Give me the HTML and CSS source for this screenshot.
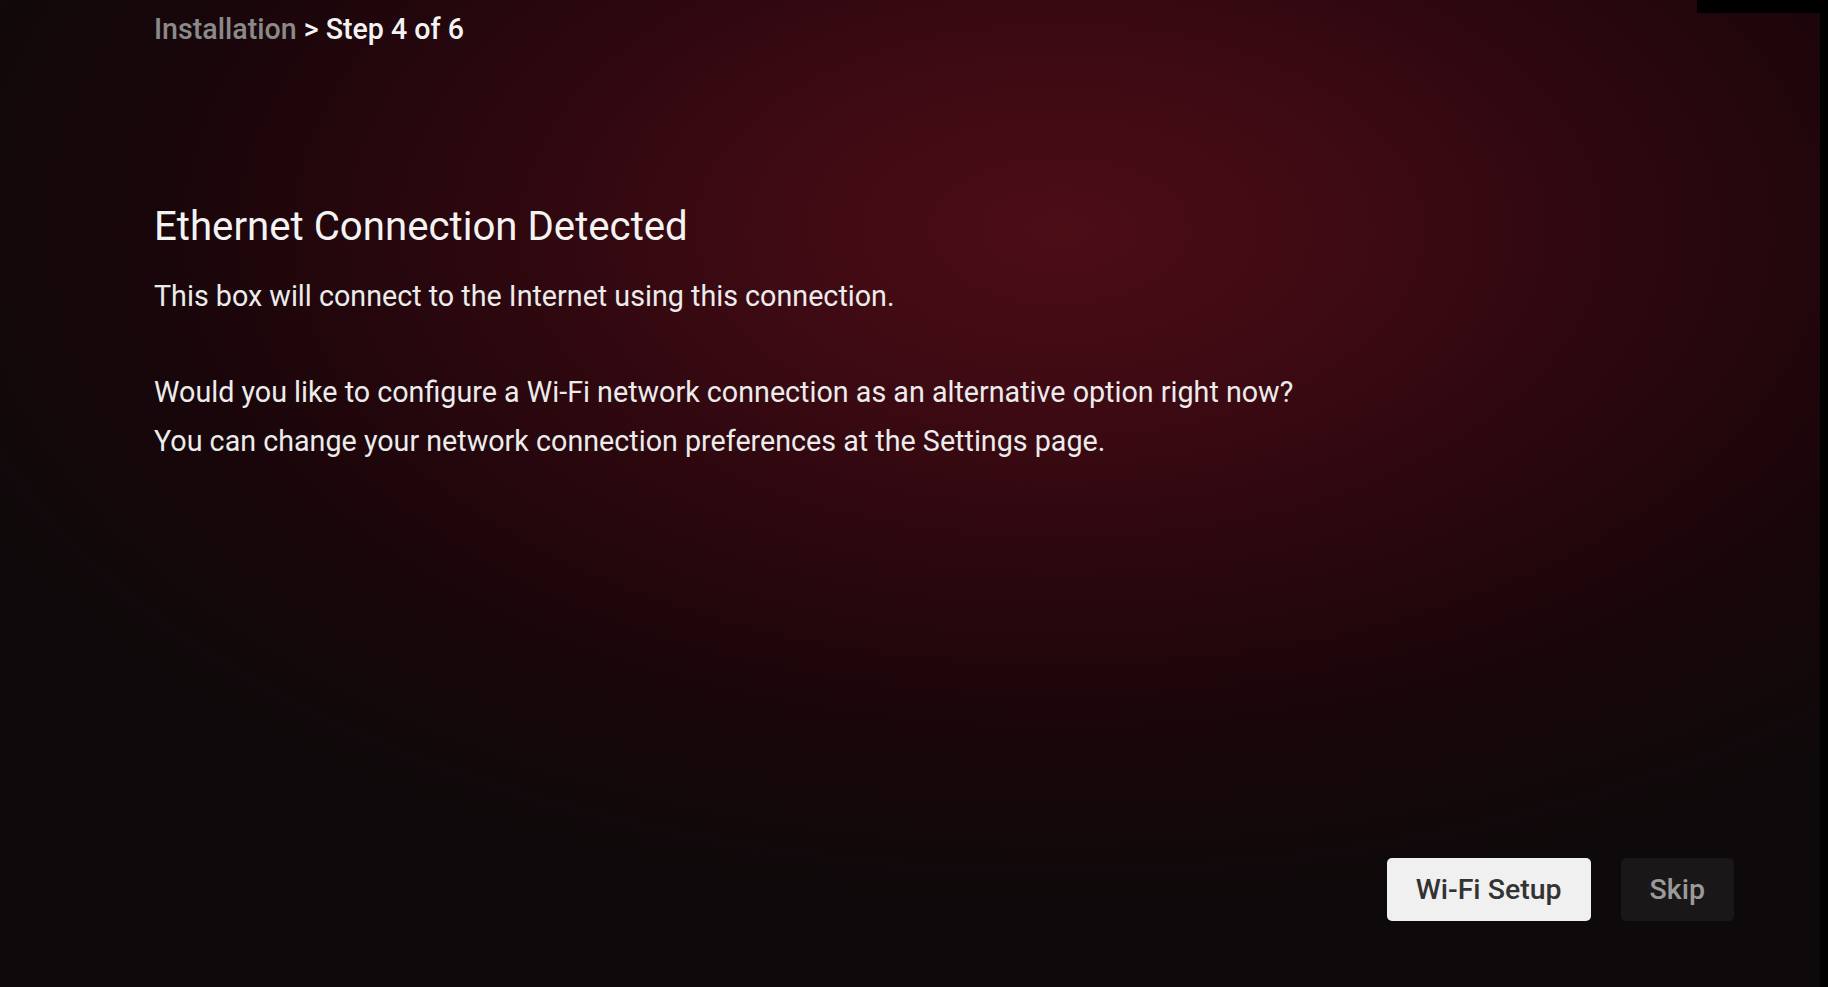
FILE: index.html
```html
<!DOCTYPE html>
<html lang="en">
<head>
<meta charset="utf-8">
<title>Installation - Step 4 of 6</title>
<link rel="stylesheet" href="styles.css">
</head>
<body>
<div class="screen">
  <div class="topbar"></div>
  <header class="crumbs">
    <span class="crumb-muted">Installation</span><span class="crumb-current"> &gt; Step 4 of 6</span>
  </header>
  <main class="content">
    <h1 class="title">Ethernet Connection Detected</h1>
    <p class="text">This box will connect to the Internet using this connection.</p>
    <p class="text text-gap">Would you like to configure a Wi-Fi network connection as an alternative option right now?<br>You can change your network connection preferences at the Settings page.</p>
  </main>
  <footer class="actions">
    <button class="btn btn-primary">Wi-Fi Setup</button>
    <button class="btn btn-secondary">Skip</button>
  </footer>
</div>
</body>
</html>
```
FILE: styles.css
```css
html, body {
  margin: 0;
  padding: 0;
  background: #000;
}
.screen {
  position: relative;
  box-sizing: border-box;
  width: 1828px;
  height: 987px;
  border-right: 8px solid #000;
  display: flex;
  flex-direction: column;
  font-family: Roboto, "Liberation Sans", sans-serif;
  color: #efefef;
  background:
    radial-gradient(ellipse 1200px 680px at 1060px 230px,
      #4c0d17 0%, #3e0a13 25%, #2b070e 50%, #19060a 75%, #0e090a 100%);
  background-color: #0e090a;
  overflow: hidden;
}
.topbar {
  position: absolute;
  top: 0;
  right: -8px;
  width: 131px;
  height: 13px;
  background: #000;
}
.crumbs {
  padding: 9px 0 0 154px;
  font-size: 28.6px;
  font-weight: 500;
  line-height: 40px;
}
.crumb-muted {
  color: #8a8a8a;
}
.crumb-current {
  color: #f3f3f3;
}
.content {
  padding-left: 154px;
  padding-top: 154px;
}
.title {
  margin: 0;
  font-size: 40.2px;
  font-weight: 400;
  line-height: 48px;
  color: #f3f3f3;
}
.text {
  margin: 21px 0 0 0;
  font-size: 28.7px;
  line-height: 49px;
  color: #ececec;
}
.text-gap {
  margin-top: 47px;
}
.actions {
  margin-top: auto;
  display: flex;
  justify-content: flex-end;
  gap: 30px;
  padding: 0 86px 66px 0;
}
.btn {
  height: 63px;
  padding: 0 29px;
  border: none;
  border-radius: 5px;
  font-family: Roboto, "Liberation Sans", sans-serif;
  font-size: 28.5px;
  font-weight: 500;
}
.btn-primary {
  background: #f0f0f0;
  color: #333;
}
.btn-secondary {
  background: #1a1718;
  color: #9a9a9a;
}
```
